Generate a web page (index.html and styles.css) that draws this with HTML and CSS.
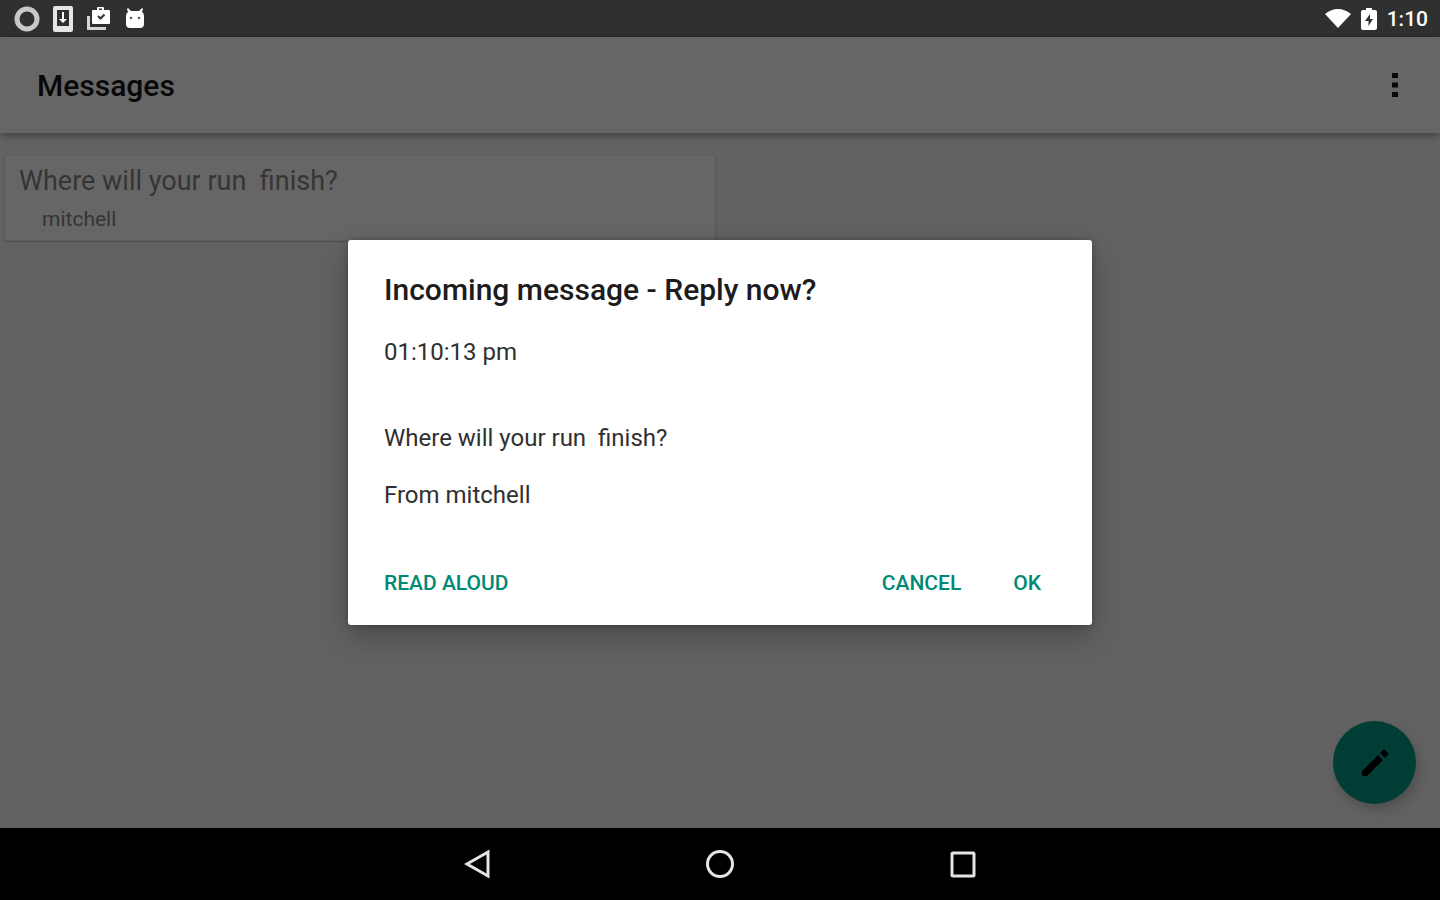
FILE: index.html
```html
<!DOCTYPE html>
<html lang="en">
<head>
<meta charset="utf-8">
<title>Messages</title>
<link rel="stylesheet" href="styles.css">
</head>
<body>
<div class="screen">
  <div class="status">
    <div class="status-group">
      <svg class="icon" viewBox="0 0 26 26"><circle cx="13" cy="13" r="10" fill="none" stroke="#c8c8c8" stroke-width="5"/></svg>
      <svg class="icon" viewBox="0 0 26 26"><path fill="#e6e6e6" fill-rule="evenodd" d="M5 0h16q2 0 2 2v22q0 2-2 2H5q-2 0-2-2V2q0-2 2-2zM7 4v16h12V4z"/><path fill="#fff" d="M12 6h2v7h3l-4 4-4-4h3z"/></svg>
      <svg class="icon" viewBox="0 0 26 26"><path fill="none" stroke="#d6d6d6" stroke-width="3" d="M2.500 10v12.500H20"/><path fill="#fff" fill-rule="evenodd" d="M7 4h4V2q0-1 1-1h5q1 0 1 1v2h5q1 0 1 1v12q0 1-1 1H7q-1 0-1-1V5q0-1 1-1zM13 2.500V4h3V2.500z"/><path fill="none" stroke="#333" stroke-width="2" d="M12 10l2.500 2.500 4-4"/></svg>
      <svg class="icon" viewBox="0 0 26 26"><path fill="#fff" d="M6 2l3 3h8l3-3 1 1-1 3q2 1 2 4v8q0 4-4 4H8q-4 0-4-4v-8q0-3 2-4L5 3z"/><circle cx="9" cy="12" r="1.200" fill="#555"/><circle cx="17" cy="12" r="1.200" fill="#555"/></svg>
    </div>
    <div class="status-group status-right">
      <svg class="icon" viewBox="0 0 26 26"><path fill="#fff" d="M0 8q13-10 26 0L13 22z"/></svg>
      <svg class="battery" viewBox="0 0 16 24"><path fill="#fff" d="M2 3h3V1h6v2h3q2 0 2 2v16q0 2-2 2H2q-2 0-2-2V5q0-2 2-2z"/><path fill="#333" d="M9 7l-5 7h3.500v5L12 12H9z"/></svg>
      <span class="clock">1:10</span>
    </div>
  </div>
  <header class="appbar">
    <h1 class="appbar-title">Messages</h1>
    <button class="more" aria-label="More options"><svg class="more-icon" viewBox="0 0 6 24"><path d="M0 0h6v5H0zM0 9.500h6v5H0zM0 19h6v5H0z"/></svg></button>
  </header>
  <main class="content">
    <article class="card">
      <h2 class="card-title">Where will your run  finish?</h2>
      <p class="card-sender">mitchell</p>
    </article>
    <button class="fab" aria-label="Write message"><svg class="fab-icon" viewBox="0 0 28 28"><path d="M1 22L17 6l5 5L6 27H2q-1 0-1-1zM19 4l3-3q1-1 2 0l3 3q1 1 0 2l-3 3z"/></svg></button>
  </main>
  <nav class="navbar">
    <button class="nav-btn" aria-label="Back"><svg class="nav-icon" viewBox="0 0 30 30"><path d="M26 3v24L5 15z"/></svg></button>
    <button class="nav-btn" aria-label="Home"><svg class="nav-icon" viewBox="0 0 30 30"><circle cx="15" cy="15" r="12.500"/></svg></button>
    <button class="nav-btn" aria-label="Overview"><svg class="nav-icon" viewBox="0 0 30 30"><rect x="4" y="4" width="22" height="23" rx="1"/></svg></button>
  </nav>
  <div class="overlay">
    <section class="dialog" role="dialog" aria-labelledby="dialog-title">
      <h2 class="dialog-title" id="dialog-title">Incoming message - Reply now?</h2>
      <div class="dialog-body">
        <p class="dialog-time">01:10:13 pm</p>
        <p class="dialog-line">Where will your run  finish?</p>
        <p class="dialog-line">From mitchell</p>
      </div>
      <div class="actions">
        <button class="action action-first">READ ALOUD</button>
        <button class="action">CANCEL</button>
        <button class="action">OK</button>
      </div>
    </section>
  </div>
</div>
</body>
</html>
```
FILE: styles.css
```css
* { box-sizing: border-box; margin: 0; padding: 0; }
body { font-family: Roboto, sans-serif; background: #626262; }
button { border: 0; background: none; font: inherit; cursor: pointer; }

.screen { position: relative; display: flex; flex-direction: column; min-height: 100vh; }

.status { display: flex; justify-content: space-between; align-items: center; height: 37px; padding: 0 12px 0 14px; background: #303030; color: #fff; }
.status-group { display: flex; align-items: center; gap: 10px; }
.icon { width: 26px; height: 26px; }
.battery { width: 16px; height: 24px; }
.clock { font-size: 21px; line-height: 26px; font-weight: 500; }

.appbar { display: flex; justify-content: space-between; align-items: center; height: 96px; padding: 0 32px 0 37px; background: #666; box-shadow: 0 2px 8px rgba(0, 0, 0, .4); z-index: 1; }
.appbar-title { padding-top: 2px; font-size: 30px; line-height: 36px; font-weight: 500; color: #080808; }
.more { display: flex; padding: 10px; }
.more-icon { width: 6px; height: 24px; fill: #080808; }

.content { position: relative; flex: 1; padding: 21px 4px; }
.card { width: 50%; max-width: 712px; padding: 8px 14px; border-radius: 4px; background: #666; border: 1px solid #5e5e5e; box-shadow: 0 1px 2px rgba(0, 0, 0, .2); color: #353535; }
.card-title { font-size: 27px; line-height: 36px; font-weight: 400; white-space: pre-wrap; }
.card-sender { padding: 7px 0 0 23px; font-size: 21px; line-height: 26px; }

.fab { position: absolute; right: 24px; bottom: 24px; display: flex; align-items: center; justify-content: center; width: 83px; height: 83px; border-radius: 50%; background: #003d34; box-shadow: 3px 6px 12px rgba(0, 0, 0, .2); }
.fab-icon { width: 28px; height: 28px; fill: #000; }

.navbar { display: flex; justify-content: center; align-items: center; gap: 183px; height: 72px; background: #000; }
.nav-btn { display: flex; padding: 15px; }
.nav-icon { width: 30px; height: 30px; fill: none; stroke: #e4e4e4; stroke-width: 3; }

.overlay { position: absolute; inset: 37px 0 72px; z-index: 2; display: flex; align-items: center; justify-content: center; }
.dialog { width: 744px; padding: 32px 36px 18px; border-radius: 3px; background: #fff; box-shadow: 0 12px 28px rgba(0, 0, 0, .25), 0 0 6px rgba(0, 0, 0, .25); }
.dialog-title { font-size: 30px; line-height: 36px; font-weight: 500; color: #1c1c1c; }
.dialog-body { padding: 30px 0 49px; font-size: 24px; line-height: 29px; color: #303030; }
.dialog-time { padding-bottom: 57px; }
.dialog-line + .dialog-line { padding-top: 28px; }
.dialog-line { white-space: pre-wrap; }
.actions { display: flex; justify-content: flex-end; gap: 22px; }
.action { padding: 14px 15px; font-size: 21px; line-height: 20px; font-weight: 500; color: #008975; }
.action-first { margin-right: auto; padding-left: 0; }
```
